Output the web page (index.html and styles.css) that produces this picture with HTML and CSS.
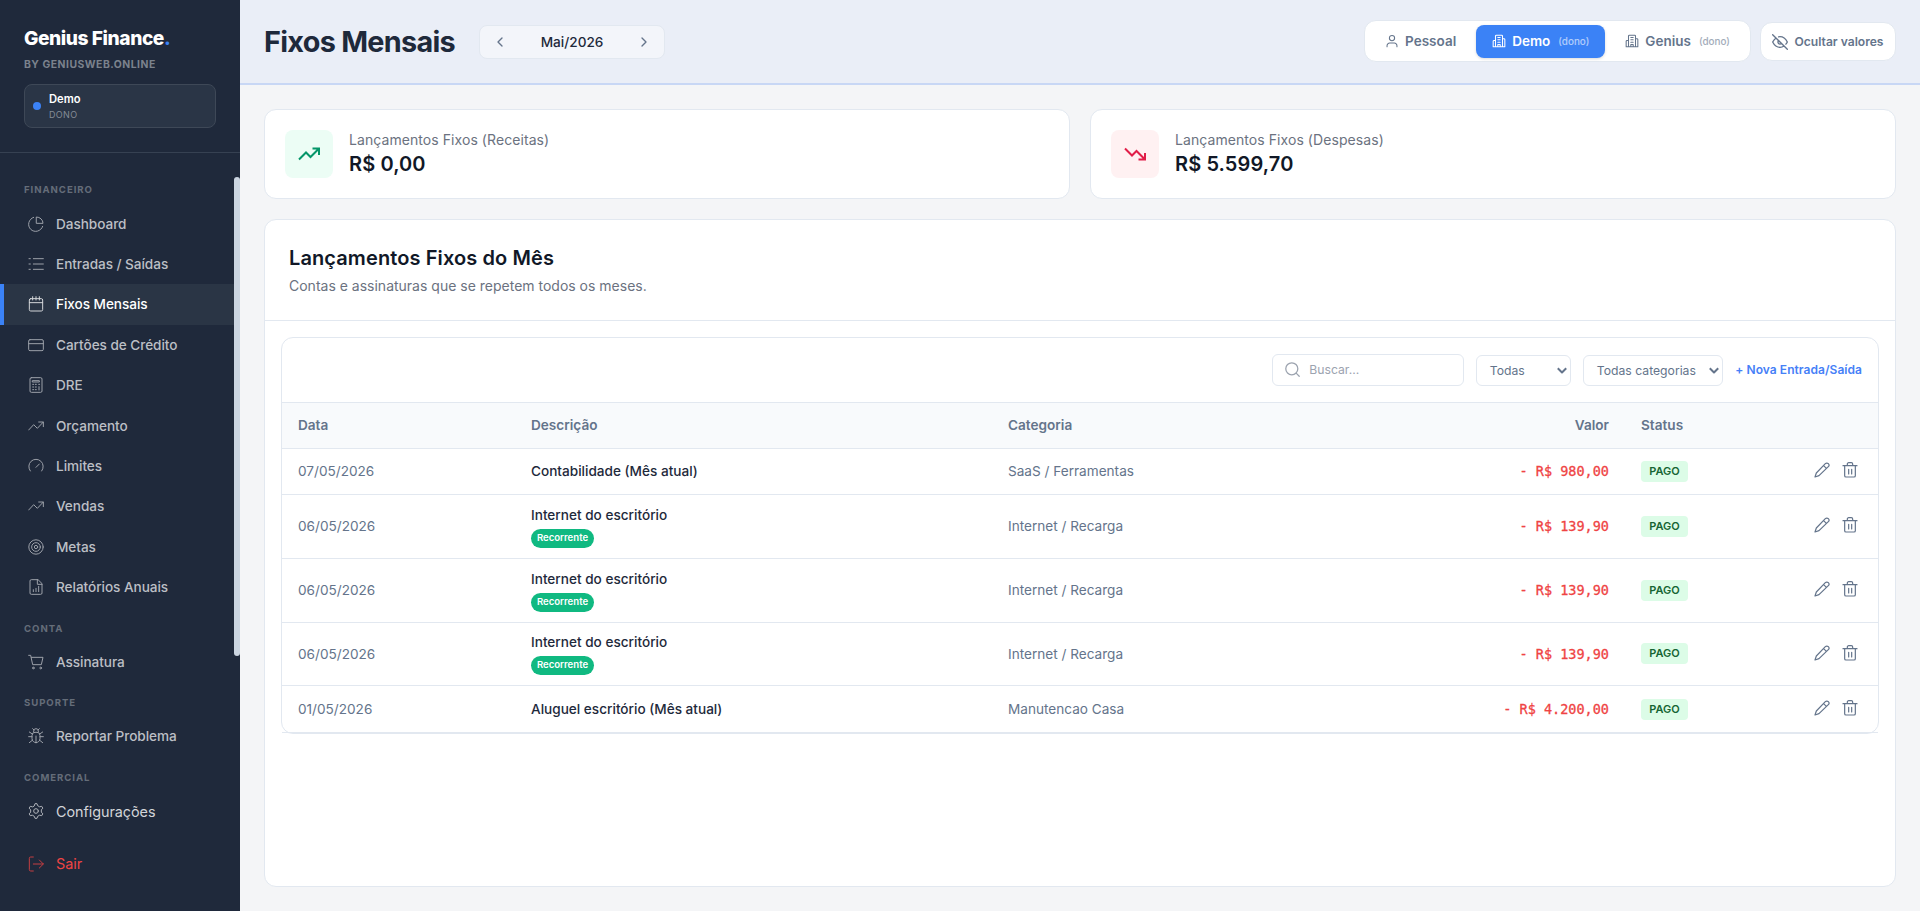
FILE: index.html
```
<!DOCTYPE html>
<html lang="pt-BR">

<head>
    <meta charset="UTF-8">
    <meta name="viewport" content="width=device-width, initial-scale=1.0">
    <title>Genius Finance - Fixos Mensais</title>

    <link rel="stylesheet" href="styles.css">
</head>

<body>
    <!-- Icons -->
    <svg class="sprite" width="0" height="0">
        <symbol id="pie" viewBox="0 0 24 24"><path d="M13 1.500a9.500 9.500 0 0 1 9.500 9.500H13z" /><path d="M8.500 2A10.800 10.800 0 1 0 22 15.500" /></symbol>
        <symbol id="list" viewBox="0 0 24 24"><path d="M8 4h15M8 12h15M8 20h15M1.500 4h2M1.500 12h2M1.500 20h2" /></symbol>
        <symbol id="calendar" viewBox="0 0 24 24"><rect x="2" y="4" width="20" height="18.500" rx="2" /><path d="M2 10h20M7 1v5M12 1v5M17 1v5" /></symbol>
        <symbol id="card" viewBox="0 0 24 24"><rect x="1" y="4" width="22" height="16.500" rx="2" /><path d="M1 10h22" /></symbol>
        <symbol id="calc" viewBox="0 0 24 24"><rect x="3" y="1" width="18" height="22" rx="2" /><path d="M7 5.500h10v2H7zM7 11h1.500M11 11h1.500M16 11h1.500M7 15h1.500M11 15h1.500M7 19h1.500M11 19h1.500M16.500 14.500v5" /></symbol>
        <symbol id="up" viewBox="0 0 24 24"><path d="M1 18l7.500-8 5.500 5.500L23 6M16 6h7v7" /></symbol>
        <symbol id="trend-up" viewBox="0 0 24 24"><path d="M2 17.500l7-7 4.500 4.500L22 6.500M15.500 6.500H22V13" /></symbol>
        <symbol id="trend-down" viewBox="0 0 24 24"><path d="M2 6.500l7 7 4.500-4.500L22 17.500M15.500 17.500H22V11" /></symbol>
        <symbol id="gauge" viewBox="0 0 24 24"><path d="M12 14l5-5M3.500 19.500a10.800 10.800 0 1 1 17 0" /></symbol>
        <symbol id="target" viewBox="0 0 24 24"><circle cx="12" cy="12" r="10.800" /><circle cx="12" cy="12" r="6.500" /><circle cx="12" cy="12" r="2.500" /></symbol>
        <symbol id="report" viewBox="0 0 24 24"><path d="M14.500 1H5a2 2 0 0 0-2 2v18a2 2 0 0 0 2 2h14a2 2 0 0 0 2-2V7.500zM14 1v7h7M8 19v-3M12 19v-5M16 19v-8" /></symbol>
        <symbol id="cart" viewBox="0 0 24 24"><path d="M1 2h3l3 14h13l2.500-11H5" /><circle cx="8" cy="21" r="1.300" /><circle cx="19" cy="21" r="1.300" /></symbol>
        <symbol id="bug" viewBox="0 0 24 24"><path d="M8.500 6V4.500a3.500 3.500 0 0 1 7 0V6M7 1l2 2M17 1l-2 2M12 22a6 6 0 0 1-6-6v-5a4.500 4.500 0 0 1 4.500-4.500h3A4.500 4.500 0 0 1 18 11v5a6 6 0 0 1-6 6zM12 12v10M6 13H1M18 13h5M6.500 9L2 6M17.500 9L22 6M7 18l-5 4M17 18l5 4" /></symbol>
        <symbol id="gear" viewBox="0 0 24 24"><path d="M9.500 4L10.500 1h3l1 3 3 1.700 3.100-.7 1.600 2.700L20 10.300v3.400l2.200 2.600-1.600 2.700-3.100-.7-3 1.700-1 3h-3l-1-3-3-1.700-3.100.7-1.600-2.700L4 13.700v-3.400L1.800 7.700 3.400 5l3.100.7z" /><circle cx="12" cy="12" r="3.500" /></symbol>
        <symbol id="exit" viewBox="0 0 24 24"><path d="M8 1.500H4a2 2 0 0 0-2 2v17a2 2 0 0 0 2 2h4M8 12h15M17 6l6 6-6 6" /></symbol>
        <symbol id="user" viewBox="0 0 24 24"><circle cx="12" cy="7" r="4.500" /><path d="M3.500 22v-2a4.500 4.500 0 0 1 4.500-4.500h8a4.500 4.500 0 0 1 4.500 4.500v2" /></symbol>
        <symbol id="building" viewBox="0 0 24 24"><path d="M6 22V3.500A1.500 1.500 0 0 1 7.500 2h9A1.500 1.500 0 0 1 18 3.500V22zM6 11H3.500A1.500 1.500 0 0 0 2 12.500V22h4M18 8h2.500A1.500 1.500 0 0 1 22 9.500V22h-4M10 6h4M10 10h4M10 14h4M10 22v-4h4v4" /></symbol>
        <symbol id="eye-off" viewBox="0 0 24 24"><path d="M9.900 4.240A9.120 9.120 0 0 1 12 4c7 0 11 8 11 8a18.500 18.500 0 0 1-2.160 3.190M14.120 14.120a3 3 0 1 1-4.240-4.240M17.940 17.940A10.070 10.070 0 0 1 12 20c-7 0-11-8-11-8a18.450 18.450 0 0 1 5.060-5.940M1 1l22 22" /></symbol>
        <symbol id="left" viewBox="0 0 24 24"><path d="M15 18l-6-6 6-6" /></symbol>
        <symbol id="right" viewBox="0 0 24 24"><path d="M9 18l6-6-6-6" /></symbol>
        <symbol id="chevron" viewBox="0 0 10 10"><path d="M1.500 3L5 6.500 8.500 3" /></symbol>
        <symbol id="search" viewBox="0 0 24 24"><circle cx="11" cy="11" r="8.500" /><path d="M17.500 17.500l4 4" /></symbol>
        <symbol id="edit" viewBox="0 0 24 24"><path d="M17 2.500a3 3 0 0 1 4.500 4.500L7.500 20.500 1.500 22.500l2-6zM14.500 5.500l4 4" /></symbol>
        <symbol id="trash" viewBox="0 0 24 24"><path d="M1.500 5.500h21M4 5.500v15a2 2 0 0 0 2 2h12a2 2 0 0 0 2-2v-15M8 5.500V3a2 2 0 0 1 2-2h4a2 2 0 0 1 2 2v2.500M10 11v7M14.500 11v7" /></symbol>
    </svg>

    <div class="layout">
        <!-- Sidebar -->
        <aside class="sidebar">
            <div class="sidebar-header">
                <div class="logo">Genius Finance<span>.</span></div>
                <div class="logo-sub">BY GENIUSWEB.ONLINE</div>
                <div class="workspace">
                    <span class="dot"></span>
                    <div>
                        <div class="workspace-name">Demo</div>
                        <div class="workspace-role">DONO</div>
                    </div>
                </div>
            </div>
            <div class="sidebar-body">
                <nav class="nav">
                    <div class="nav-title">FINANCEIRO</div>
                    <a class="nav-item"><svg><use href="#pie" /></svg>Dashboard</a>
                    <a class="nav-item"><svg><use href="#list" /></svg>Entradas / Saídas</a>
                    <a class="nav-item active"><svg><use href="#calendar" /></svg>Fixos Mensais</a>
                    <a class="nav-item"><svg><use href="#card" /></svg>Cartões de Crédito</a>
                    <a class="nav-item"><svg><use href="#calc" /></svg>DRE</a>
                    <a class="nav-item"><svg><use href="#up" /></svg>Orçamento</a>
                    <a class="nav-item"><svg><use href="#gauge" /></svg>Limites</a>
                    <a class="nav-item"><svg><use href="#up" /></svg>Vendas</a>
                    <a class="nav-item"><svg><use href="#target" /></svg>Metas</a>
                    <a class="nav-item"><svg><use href="#report" /></svg>Relatórios Anuais</a>
                    <div class="nav-title">CONTA</div>
                    <a class="nav-item"><svg><use href="#cart" /></svg>Assinatura</a>
                    <div class="nav-title">SUPORTE</div>
                    <a class="nav-item"><svg><use href="#bug" /></svg>Reportar Problema</a>
                    <div class="nav-title">COMERCIAL</div>
                    <a class="nav-item large"><svg><use href="#gear" /></svg>Configurações</a>
                    <a class="nav-item large logout"><svg><use href="#exit" /></svg>Sair</a>
                </nav>
                <div class="scrollbar"></div>
            </div>
        </aside>

        <div class="main">
            <!-- Top bar -->
            <header class="topbar">
                <h1>Fixos Mensais</h1>
                <div class="month">
                    <svg><use href="#left" /></svg>
                    <span>Mai/2026</span>
                    <svg><use href="#right" /></svg>
                </div>
                <div class="profiles">
                    <button class="profile"><svg><use href="#user" /></svg>Pessoal</button>
                    <button class="profile selected"><svg><use href="#building" /></svg>Demo <small>(dono)</small></button>
                    <button class="profile"><svg><use href="#building" /></svg>Genius <small>(dono)</small></button>
                </div>
                <button class="hide-values"><svg><use href="#eye-off" /></svg>Ocultar valores</button>
            </header>

            <main class="content">
                <!-- Totals -->
                <div class="stats">
                    <div class="stat">
                        <div class="stat-icon green"><svg><use href="#trend-up" /></svg></div>
                        <div>
                            <div class="stat-label">Lançamentos Fixos (Receitas)</div>
                            <div class="stat-value">R$ 0,00</div>
                        </div>
                    </div>
                    <div class="stat">
                        <div class="stat-icon red"><svg><use href="#trend-down" /></svg></div>
                        <div>
                            <div class="stat-label">Lançamentos Fixos (Despesas)</div>
                            <div class="stat-value">R$ 5.599,70</div>
                        </div>
                    </div>
                </div>

                <section class="panel">
                    <div class="panel-header">
                        <h2>Lançamentos Fixos do Mês</h2>
                        <p>Contas e assinaturas que se repetem todos os meses.</p>
                    </div>
                    <div class="table-card">
                        <div class="toolbar">
                            <div class="search"><svg><use href="#search" /></svg>Buscar...</div>
                            <div class="select status-select">Todas<svg><use href="#chevron" /></svg></div>
                            <div class="select category-select">Todas categorias<svg><use href="#chevron" /></svg></div>
                            <a class="new-entry">+ Nova Entrada/Saída</a>
                        </div>
                        <table>
                            <thead>
                                <tr>
                                    <th class="col-date">Data</th>
                                    <th class="col-desc">Descrição</th>
                                    <th class="col-cat">Categoria</th>
                                    <th class="col-value">Valor</th>
                                    <th class="col-status">Status</th>
                                    <th></th>
                                </tr>
                            </thead>
                            <tbody>
                                <tr>
                                    <td>07/05/2026</td>
                                    <td class="desc">Contabilidade (Mês atual)</td>
                                    <td>SaaS / Ferramentas</td>
                                    <td class="value">- R$ 980,00</td>
                                    <td><span class="paid">PAGO</span></td>
                                    <td><div class="actions"><svg><use href="#edit" /></svg><svg><use href="#trash" /></svg></div></td>
                                </tr>
                                <tr class="recurring">
                                    <td>06/05/2026</td>
                                    <td class="desc">Internet do escritório<span class="tag">Recorrente</span></td>
                                    <td>Internet / Recarga</td>
                                    <td class="value">- R$ 139,90</td>
                                    <td><span class="paid">PAGO</span></td>
                                    <td><div class="actions"><svg><use href="#edit" /></svg><svg><use href="#trash" /></svg></div></td>
                                </tr>
                                <tr class="recurring">
                                    <td>06/05/2026</td>
                                    <td class="desc">Internet do escritório<span class="tag">Recorrente</span></td>
                                    <td>Internet / Recarga</td>
                                    <td class="value">- R$ 139,90</td>
                                    <td><span class="paid">PAGO</span></td>
                                    <td><div class="actions"><svg><use href="#edit" /></svg><svg><use href="#trash" /></svg></div></td>
                                </tr>
                                <tr class="recurring">
                                    <td>06/05/2026</td>
                                    <td class="desc">Internet do escritório<span class="tag">Recorrente</span></td>
                                    <td>Internet / Recarga</td>
                                    <td class="value">- R$ 139,90</td>
                                    <td><span class="paid">PAGO</span></td>
                                    <td><div class="actions"><svg><use href="#edit" /></svg><svg><use href="#trash" /></svg></div></td>
                                </tr>
                                <tr class="last">
                                    <td>01/05/2026</td>
                                    <td class="desc">Aluguel escritório (Mês atual)</td>
                                    <td>Manutencao Casa</td>
                                    <td class="value">- R$ 4.200,00</td>
                                    <td><span class="paid">PAGO</span></td>
                                    <td><div class="actions"><svg><use href="#edit" /></svg><svg><use href="#trash" /></svg></div></td>
                                </tr>
                            </tbody>
                        </table>
                    </div>
                </section>
            </main>
        </div>
    </div>
</body>

</html>
```
FILE: styles.css
```
* {
    box-sizing: border-box;
}

body {
    margin: 0;
    font-family: "Inter", sans-serif;
    font-size: 14px;
    color: #1e293b;
    background: #f4f5f7;
}

h1,
h2,
p {
    margin: 0;
}

button {
    font-family: inherit;
    border: none;
    background: none;
    cursor: pointer;
}

svg {
    display: block;
    flex-shrink: 0;
    fill: none;
    stroke: currentColor;
    stroke-width: 1.5;
    stroke-linecap: round;
    stroke-linejoin: round;
}

.sprite {
    display: none;
}

.layout {
    display: flex;
    height: 911px;
    overflow: hidden;
}

/* Sidebar */
.sidebar {
    width: 240px;
    flex-shrink: 0;
    display: flex;
    flex-direction: column;
    background: #1f293b;
}

.sidebar-header {
    height: 153px;
    padding: 26px 24px 0;
    border-bottom: 1px solid #364152;
}

.logo {
    font-size: 19.2px;
    line-height: 24px;
    font-weight: 800;
    letter-spacing: -0.45px;
    color: #fff;
}

.logo span {
    color: #3b82f6;
}

.logo-sub {
    margin-top: 7px;
    font-size: 10.4px;
    line-height: 16px;
    font-weight: 700;
    letter-spacing: 0.5px;
    color: #7b828d;
}

.workspace {
    display: flex;
    align-items: center;
    gap: 8px;
    height: 44px;
    margin-top: 11px;
    padding: 0 8px;
    border: 1px solid #3e4857;
    border-radius: 8px;
    background: #2a3546;
}

.dot {
    width: 8px;
    height: 8px;
    border-radius: 50%;
    background: #3b82f6;
}

.workspace-name {
    font-size: 11.2px;
    line-height: 16px;
    font-weight: 600;
    color: #fff;
}

.workspace-role {
    padding-top: 1px;
    font-size: 9px;
    line-height: 14px;
    letter-spacing: 0.35px;
    color: #858c96;
}

.sidebar-body {
    display: flex;
    flex: 1;
    padding-top: 24px;
}

.nav {
    flex: 1;
}

.scrollbar {
    width: 6px;
    height: 479px;
    border-radius: 3px;
    background: #cbd5e1;
}

.nav-title {
    height: 34px;
    padding: 4px 24px 0;
    font-size: 9.6px;
    line-height: 18px;
    font-weight: 700;
    letter-spacing: 0.95px;
    color: #656d79;
}

.nav-item:first-of-type {
    margin-top: -7.4px;
}

.nav-item {
    display: flex;
    align-items: center;
    gap: 12px;
    height: 40.35px;
    padding-left: 24px;
    border-left: 4px solid transparent;
    font-size: 13.6px;
    font-weight: 500;
    letter-spacing: -0.05px;
    color: #bcbfc5;
}

.nav-item svg {
    width: 16px;
    height: 16px;
    opacity: 0.8;
}

.nav-item.active {
    color: #fff;
    border-left-color: #3b82f6;
    background: #2a3545;
}

.nav-item + .nav-title {
    height: 26.4px;
    margin-top: 8px;
    padding-top: 4.5px;
}

.nav-item.large {
    font-size: 14.4px;
    font-weight: 400;
    color: #d2d4d8;
}

.nav-item.logout {
    margin-top: 12.5px;
    color: #ef4444;
}

/* Top bar */
.main {
    flex: 1;
    min-width: 0;
    display: flex;
    flex-direction: column;
}

.topbar {
    display: flex;
    align-items: center;
    height: 85px;
    padding: 0 24px;
    border-bottom: 2px solid #c8d7f5;
    background: #eaeef7;
}

.topbar h1 {
    font-size: 28.8px;
    line-height: 36px;
    font-weight: 700;
    letter-spacing: -0.7px;
}

.month {
    display: flex;
    align-items: center;
    justify-content: space-between;
    width: 186px;
    height: 34px;
    margin-left: 24px;
    padding: 0 12px;
    border: 1px solid #e2e8f0;
    border-radius: 8px;
    background: #f3f5fa;
    font-size: 13.6px;
    font-weight: 500;
}

.month svg {
    width: 16px;
    height: 16px;
    stroke-width: 2;
    color: #64748b;
}

.profiles {
    display: flex;
    align-items: center;
    gap: 4px;
    height: 42px;
    margin-left: auto;
    margin-bottom: 1px;
    padding: 0 4px;
    border: 1px solid #e2e8f0;
    border-radius: 12px;
    background: #fff;
}

.profile {
    display: flex;
    align-items: center;
    gap: 6px;
    height: 33px;
    padding: 0 16px;
    border-radius: 8px;
    font-size: 13.5px;
    font-weight: 600;
    color: #64748b;
}

.profile svg {
    width: 14px;
    height: 14px;
    stroke-width: 1.8;
}

.profile small {
    margin-left: 2px;
    font-size: 9.9px;
    font-weight: 500;
    opacity: 0.6;
}

.profile.selected {
    color: #fff;
    background: #3b82f6;
    box-shadow: 0 1px 3px rgba(0, 0, 0, 0.15);
}

.hide-values {
    display: flex;
    align-items: center;
    gap: 6px;
    height: 39px;
    margin-left: 9px;
    padding: 0 11.5px;
    border: 1px solid #e2e8f0;
    border-radius: 12px;
    background: #fff;
    font-size: 12.1px;
    font-weight: 600;
    color: #64748b;
}

.hide-values svg {
    width: 16px;
    height: 16px;
    stroke-width: 2;
}

/* Content */
.content {
    flex: 1;
    display: flex;
    flex-direction: column;
    gap: 20px;
    padding: 24px;
}

.stats {
    display: grid;
    grid-template-columns: 1fr 1fr;
    gap: 20px;
}

.stat {
    display: flex;
    align-items: center;
    gap: 16px;
    height: 90px;
    padding: 0 20px;
    border: 1px solid #e2e8f0;
    border-radius: 12px;
    background: #fff;
}

.stat-icon {
    display: flex;
    align-items: center;
    justify-content: center;
    width: 48px;
    height: 48px;
    border-radius: 8px;
}

.stat-icon svg {
    width: 24px;
    height: 24px;
    stroke-width: 2;
    stroke-linecap: butt;
    stroke-linejoin: miter;
}

.stat-icon.green {
    color: #059669;
    background: #ecfdf5;
}

.stat-icon.red {
    color: #e11d48;
    background: #fff1f2;
}

.stat-label {
    font-size: 14px;
    line-height: 20px;
    letter-spacing: 0.07px;
    color: #6b7280;
}

.stat-value {
    font-size: 20px;
    line-height: 28px;
    font-weight: 600;
    letter-spacing: 0.1px;
    color: #111827;
}

.panel {
    flex: 1;
    border: 1px solid #e2e8f0;
    border-radius: 12px;
    background: #fff;
}

.panel-header {
    height: 101px;
    padding: 24px 24px 0;
    border-bottom: 1px solid #e2e8f0;
}

.panel-header h2 {
    font-size: 20px;
    line-height: 28px;
    font-weight: 600;
    letter-spacing: 0.1px;
    color: #111827;
}

.panel-header p {
    margin-top: 4px;
    font-size: 14px;
    line-height: 20px;
    color: #6b7280;
}

/* Table */
.table-card {
    height: 397px;
    margin: 16px;
    border: 1px solid #e2e8f0;
    border-radius: 12px;
}

.toolbar {
    display: flex;
    align-items: flex-end;
    justify-content: flex-end;
    gap: 12px;
    height: 65px;
    padding: 16px;
    border-bottom: 1px solid #e2e8f0;
    font-size: 12.2px;
    color: #64748b;
}

.search {
    display: flex;
    align-items: center;
    gap: 8px;
    width: 192px;
    height: 32px;
    padding: 0 0 1px 11px;
    border: 1px solid #e2e8f0;
    border-radius: 6px;
    color: #9ca3af;
}

.search svg {
    width: 17px;
    height: 17px;
    stroke-width: 1.8;
}

.select {
    display: flex;
    align-items: center;
    justify-content: space-between;
    height: 31px;
    padding: 0 3px 0 12.5px;
    border: 1px solid #e2e8f0;
    border-radius: 6px;
}

.status-select {
    width: 95px;
}

.category-select {
    width: 140px;
}

.select svg {
    width: 10px;
    height: 10px;
    stroke-width: 2;
    stroke-linecap: square;
}

.new-entry {
    line-height: 32px;
    font-size: 12px;
    font-weight: 600;
    letter-spacing: 0.05px;
    color: #4680f7;
}

table {
    width: 100%;
    table-layout: fixed;
    border-collapse: separate;
    border-spacing: 0;
}

th,
td {
    padding: 0 16px 1px;
    border-bottom: 1px solid #e2e8f0;
    text-align: left;
    vertical-align: middle;
    color: #64748b;
}

th {
    height: 46px;
    font-size: 13.6px;
    font-weight: 600;
    background: #f8fafc;
}

td {
    height: 46px;
    font-size: 13.6px;
}

.recurring td {
    height: 63.8px;
    padding-bottom: 0;
}

.last td {
    height: 47px;
    padding-bottom: 0;
}

.col-date {
    width: 233px;
}

.col-desc {
    width: 477px;
}

.col-cat {
    width: 428px;
}

.col-value {
    width: 205px;
    text-align: right;
}

.col-status {
    width: 128px;
}

.desc {
    font-weight: 500;
    color: #1e293b;
}

.recurring .desc {
    padding-top: 2px;
}

.tag {
    display: block;
    width: 63px;
    height: 19px;
    margin-top: 6px;
    border-radius: 10px;
    background: #10b981;
    font-size: 9.6px;
    line-height: 18px;
    font-weight: 600;
    text-align: center;
    color: #fff;
}

.value {
    font-family: "DejaVu Sans Mono", monospace;
    font-size: 13.5px;
    text-align: right;
    color: #ef4444;
    -webkit-text-stroke: 0.3px #ef4444;
}

.paid {
    display: block;
    width: 47px;
    height: 21px;
    border-radius: 4px;
    background: #dcfce7;
    font-size: 11px;
    line-height: 21px;
    font-weight: 600;
    text-align: center;
    color: #166534;
}

.actions {
    display: flex;
    justify-content: flex-end;
    gap: 12px;
    padding: 0 4px 2px 0;
}

.actions svg {
    width: 16px;
    height: 16px;
    stroke-width: 1.8;
}
```
